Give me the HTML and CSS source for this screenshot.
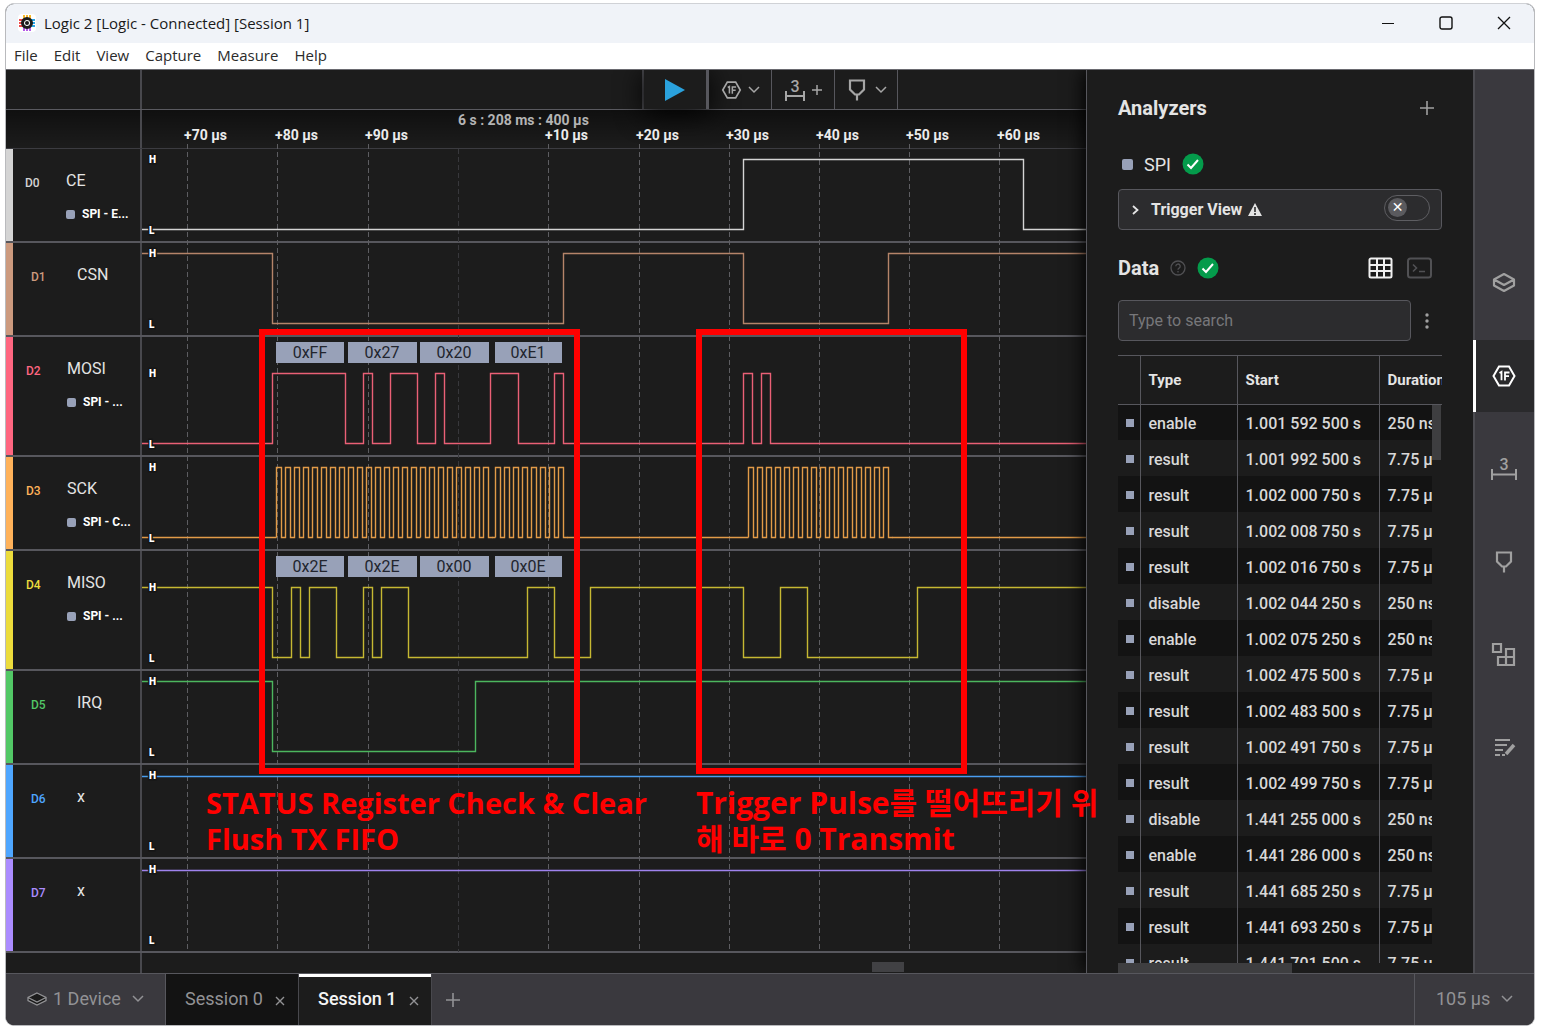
FILE: index.html
```html
<!DOCTYPE html>
<html lang="en">
<head>
<meta charset="utf-8">
<title>Logic 2 [Logic - Connected] [Session 1]</title>
<link rel="stylesheet" href="styles.css">
</head>
<body>
<svg class="defs" width="0" height="0" aria-hidden="true">
  <defs>
    <!-- eight clock pulses -->
    <path id="clock8" d="M0 70V0h5v70h4V0h5v70h4V0h5v70h4V0h5v70h4V0h5v70h4V0h5v70h4V0h5v70h4V0h5v70h4"/>
    <g id="i-hex" fill="none" stroke="currentColor" stroke-width="2">
      <path d="M7 2.500h10l5.500 9.500-5.500 9.500h-10l-5.500-9.500z"/>
      <path stroke-width="1.800" d="M7.500 9l2-1.200v8.500M13 16.500v-8h4.500M13 12.200h4"/>
    </g>
    <g id="i-pin" fill="none" stroke="currentColor" stroke-width="2.200">
      <path d="M5 2.500h14v9l-5 5h-4l-5-5zM12 16.500v6"/>
    </g>
    <path id="i-chev" d="M1 1l5 5 5-5" fill="none" stroke="currentColor" stroke-width="1.500"/>
    <g id="i-check"><circle cx="11" cy="11" r="10.500" fill="#049b4b"/><path d="M5.500 11.500l3.500 3.500 7-8" fill="none" stroke="#fff" stroke-width="2"/></g>
  </defs>
</svg>

<div class="window">
  <header class="titlebar">
    <svg class="logo" width="18" height="18" viewBox="0 0 18 18" aria-hidden="true">
      <rect width="18" height="18" rx="4" fill="#fff"/>
      <path d="M6 1v4M9 1v4M12 1v4" stroke="#f5b82e" stroke-width="2"/>
      <path d="M6 13v4M9 13v4M12 13v4" stroke="#b45be8" stroke-width="2"/>
      <path d="M1 6h4M1 9h4M1 12h4" stroke="#ee4a4a" stroke-width="2"/>
      <path d="M13 6h4M13 9h4M13 12h4" stroke="#2aa7e8" stroke-width="2"/>
      <circle cx="9" cy="9" r="4.500" fill="#fff" stroke="#1c1c1c" stroke-width="3"/>
      <circle cx="9" cy="9" r="2" fill="#1c1c1c"/>
    </svg>
    <h1>Logic 2 [Logic - Connected] [Session 1]</h1>
    <div class="wincontrols">
      <button aria-label="Minimize"><svg width="14" height="14"><path d="M1 7.500h12" stroke="#111"/></svg></button>
      <button aria-label="Maximize"><svg width="14" height="14"><rect x="1" y="1" width="12" height="12" rx="2" fill="none" stroke="#111" stroke-width="1.400"/></svg></button>
      <button aria-label="Close"><svg width="14" height="14"><path d="M1 1l12 12M13 1L1 13" stroke="#111" stroke-width="1.300"/></svg></button>
    </div>
  </header>
  <nav class="menubar">
    <button>File</button><button>Edit</button><button>View</button><button>Capture</button><button>Measure</button><button>Help</button>
  </nav>

  <div class="main">
    <section class="capture">
      <div class="toolbar">
        <div class="corner"></div>
        <div class="tools">
          <button class="tool play" aria-label="Start capture"><svg width="22" height="24"><path d="M1 1l20 11L1 23z" fill="#2aa1dc"/></svg></button>
          <button class="tool" aria-label="Add analyzer"><svg width="21" height="20" viewBox="0 0 24 24"><use href="#i-hex"/></svg><svg width="12" height="8"><use href="#i-chev"/></svg></button>
          <button class="tool" aria-label="Add measurement">
            <svg width="22" height="26"><text x="11" y="15" class="three">3</text><path d="M2 14v10M20 14v10M2 19h18" stroke="currentColor" stroke-width="2"/></svg>
            <svg width="10" height="10"><path d="M5 0v10M0 5h10" stroke="currentColor" stroke-width="1.500"/></svg>
          </button>
          <button class="tool" aria-label="Add marker"><svg width="24" height="24" viewBox="0 0 24 24"><use href="#i-pin"/></svg><svg width="12" height="8"><use href="#i-chev"/></svg></button>
        </div>
      </div>

      <div class="timeline">
        <div class="grid">
          <svg width="100%" height="100%">
            <g class="ticks">
              <text x="42" y="30">+70 µs</text><text x="133" y="30">+80 µs</text><text x="223" y="30">+90 µs</text>
              <text x="316" y="15" class="base">6 s : 208 ms : 400 µs</text>
              <text x="403" y="30">+10 µs</text><text x="494" y="30">+20 µs</text><text x="584" y="30">+30 µs</text>
              <text x="674" y="30">+40 µs</text><text x="764" y="30">+50 µs</text><text x="855" y="30">+60 µs</text>
            </g>
            <path class="gridline" d="M45.500 34V842M135.500 34V842M226.500 34V842M406.500 34V842M497.500 34V842M587.500 34V842M677.500 34V842M767.500 34V842M857.500 34V842"/>
            <path class="gridline dim" d="M316.500 39V842"/>
          </svg>
        </div>
        <div class="ruler"><div class="corner"></div></div>

        <div class="row d0">
          <div class="channel first"><span class="id">D0</span><div><div class="name">CE</div><div class="sub"><i></i>SPI - E...</div></div></div>
          <svg class="wave"><path d="M0 80.500H601.500V10.500H881.500V80.500H4000"/><g class="hl"><text x="7" y="14">H</text><text x="7" y="85">L</text></g></svg>
        </div>
        <div class="row d1">
          <div class="channel plain"><span class="id">D1</span><div class="name">CSN</div></div>
          <svg class="wave"><path d="M0 10.500H130.500V80.500H421.500V10.500H601.500V80.500H746.500V10.500H4000"/><g class="hl"><text x="7" y="14">H</text><text x="7" y="85">L</text></g></svg>
        </div>
        <div class="row tall d2">
          <div class="channel"><span class="id">D2</span><div><div class="name">MOSI</div><div class="sub"><i></i>SPI - ...</div></div></div>
          <svg class="wave"><path d="M0 106.500H130.500V36.500H203.500V106.500H221.500V36.500H230.500V106.500H248.500V36.500H275.500V106.500H293.500V36.500H302.500V106.500H348.500V36.500H376.500V106.500H412.500V36.500H421.500V106.500H601.500V36.500H610.500V106.500H619.500V36.500H628.500V106.500H4000"/>
            <g class="frame"><rect x="134" y="5" width="68" height="21"/><rect x="206" y="5" width="69" height="21"/><rect x="278" y="5" width="69" height="21"/><rect x="353" y="5" width="67" height="21"/>
            <text x="168" y="21">0xFF</text><text x="240" y="21">0x27</text><text x="312" y="21">0x20</text><text x="386" y="21">0xE1</text></g>
            <g class="hl"><text x="7" y="40">H</text><text x="7" y="111">L</text></g></svg>
        </div>
        <div class="row d3">
          <div class="channel"><span class="id">D3</span><div><div class="name">SCK</div><div class="sub"><i></i>SPI - C...</div></div></div>
          <svg class="wave"><path d="M0 80.500H134.500M350 80.500H353.500M425 80.500H606.500M750 80.500H4000"/>
            <use href="#clock8" x="134.500" y="10.500"/><use href="#clock8" x="206.500" y="10.500"/><use href="#clock8" x="278.500" y="10.500"/><use href="#clock8" x="353.500" y="10.500"/><use href="#clock8" x="606.500" y="10.500"/><use href="#clock8" x="678.500" y="10.500"/>
            <g class="hl"><text x="7" y="14">H</text><text x="7" y="85">L</text></g></svg>
        </div>
        <div class="row tall d4">
          <div class="channel"><span class="id">D4</span><div><div class="name">MISO</div><div class="sub"><i></i>SPI - ...</div></div></div>
          <svg class="wave"><path d="M0 36.500H130.500V106.500H149.500V36.500H158.500V106.500H167.500V36.500H194.500V106.500H221.500V36.500H230.500V106.500H239.500V36.500H266.500V106.500H385.500V36.500H412.500V106.500H448.500V36.500H601.500V106.500H638.500V36.500H665.500V106.500H775.500V36.500H4000"/>
            <g class="frame"><rect x="134" y="5" width="68" height="21"/><rect x="206" y="5" width="69" height="21"/><rect x="278" y="5" width="69" height="21"/><rect x="353" y="5" width="67" height="21"/>
            <text x="168" y="21">0x2E</text><text x="240" y="21">0x2E</text><text x="312" y="21">0x00</text><text x="386" y="21">0x0E</text></g>
            <g class="hl"><text x="7" y="40">H</text><text x="7" y="111">L</text></g></svg>
        </div>
        <div class="row d5">
          <div class="channel plain"><span class="id">D5</span><div class="name">IRQ</div></div>
          <svg class="wave"><path d="M0 10.500H130.500V80.500H333.500V10.500H4000"/><g class="hl"><text x="7" y="14">H</text><text x="7" y="85">L</text></g></svg>
        </div>
        <div class="row d6">
          <div class="channel plain"><span class="id">D6</span><div class="name">x</div></div>
          <svg class="wave"><path d="M0 11.500H4000"/><g class="hl"><text x="7" y="14">H</text><text x="7" y="85">L</text></g></svg>
        </div>
        <div class="row d7">
          <div class="channel plain"><span class="id">D7</span><div class="name">x</div></div>
          <svg class="wave"><path d="M0 11.500H4000"/><g class="hl"><text x="7" y="14">H</text><text x="7" y="85">L</text></g></svg>
        </div>
        <div class="scrollrow"><div class="corner"></div><div class="track"><div class="thumb"></div></div></div>
      </div>
    </section>

    <aside class="panel">
      <div class="head"><h2>Analyzers</h2><button class="icon" aria-label="Add analyzer"><svg width="14" height="14"><path d="M7 0v14M0 7h14" stroke="currentColor" stroke-width="1.600"/></svg></button></div>
      <div class="analyzer"><i></i><span>SPI</span><svg width="22" height="22"><use href="#i-check"/></svg></div>
      <div class="trigger">
        <svg width="8" height="12"><path d="M1 2l4.500 4L1 10" fill="none" stroke="#e4e4e4" stroke-width="1.800"/></svg>
        <label for="trig">Trigger View</label>
        <svg class="warn" width="14" height="13"><path d="M7 0l7 13H0z" fill="#e4e4e4"/><path d="M7 4v5M7 10v2" stroke="#2c2c2e" stroke-width="1.600"/></svg>
        <input type="checkbox" id="trig" class="switch">
      </div>
      <div class="head data"><h2>Data</h2>
        <svg width="16" height="16" class="help"><circle cx="8" cy="8" r="7" fill="none" stroke="#505053" stroke-width="1.300"/><path d="M5.800 6.200a2.200 2.200 0 1 1 3.300 1.900q-1.100.7-1.100 1.700M8 11v1.400" fill="none" stroke="#505053" stroke-width="1.300"/></svg>
        <svg width="22" height="22"><use href="#i-check"/></svg>
        <button class="icon table-view" aria-label="Table view"><svg width="25" height="22"><path d="M3 1.500h19a1.500 1.500 0 0 1 1.500 1.500v16a1.500 1.500 0 0 1-1.500 1.500h-19a1.500 1.500 0 0 1-1.500-1.500v-16a1.500 1.500 0 0 1 1.500-1.500zM9 1v20M16 1v20M1 8h23M1 14h23" fill="none" stroke="#f0f0f0" stroke-width="2"/></svg></button>
        <button class="icon" aria-label="Terminal view"><svg width="25" height="22"><rect x="1" y="1.500" width="23" height="19" rx="2.500" fill="none" stroke="#515154" stroke-width="2"/><path d="M6 7.500l3.500 3.500L6 14.500M12 14.500h6" fill="none" stroke="#515154" stroke-width="1.600"/></svg></button>
      </div>
      <div class="search">
        <input type="text" placeholder="Type to search" aria-label="Search data">
        <button class="icon" aria-label="More"><svg width="4" height="18"><g fill="#a0a0a0"><circle cx="2" cy="3" r="1.700"/><circle cx="2" cy="9" r="1.700"/><circle cx="2" cy="15" r="1.700"/></g></svg></button>
      </div>
      <div class="tablebox">
        <table>
          <colgroup><col class="c1"><col class="c2"><col class="c3"><col class="c4"></colgroup>
          <thead><tr><th></th><th>Type</th><th>Start</th><th>Duration</th></tr></thead>
          <tbody>
            <tr><td><i></i></td><td>enable</td><td>1.001 592 500 s</td><td>250 ns</td></tr>
            <tr><td><i></i></td><td>result</td><td>1.001 992 500 s</td><td>7.75 µs</td></tr>
            <tr><td><i></i></td><td>result</td><td>1.002 000 750 s</td><td>7.75 µs</td></tr>
            <tr><td><i></i></td><td>result</td><td>1.002 008 750 s</td><td>7.75 µs</td></tr>
            <tr><td><i></i></td><td>result</td><td>1.002 016 750 s</td><td>7.75 µs</td></tr>
            <tr><td><i></i></td><td>disable</td><td>1.002 044 250 s</td><td>250 ns</td></tr>
            <tr><td><i></i></td><td>enable</td><td>1.002 075 250 s</td><td>250 ns</td></tr>
            <tr><td><i></i></td><td>result</td><td>1.002 475 500 s</td><td>7.75 µs</td></tr>
            <tr><td><i></i></td><td>result</td><td>1.002 483 500 s</td><td>7.75 µs</td></tr>
            <tr><td><i></i></td><td>result</td><td>1.002 491 750 s</td><td>7.75 µs</td></tr>
            <tr><td><i></i></td><td>result</td><td>1.002 499 750 s</td><td>7.75 µs</td></tr>
            <tr><td><i></i></td><td>disable</td><td>1.441 255 000 s</td><td>250 ns</td></tr>
            <tr><td><i></i></td><td>enable</td><td>1.441 286 000 s</td><td>250 ns</td></tr>
            <tr><td><i></i></td><td>result</td><td>1.441 685 250 s</td><td>7.75 µs</td></tr>
            <tr><td><i></i></td><td>result</td><td>1.441 693 250 s</td><td>7.75 µs</td></tr>
            <tr><td><i></i></td><td>result</td><td>1.441 701 500 s</td><td>7.75 µs</td></tr>
          </tbody>
        </table>
        <div class="vscroll"></div>
      </div>
      <div class="hscroll"></div>
    </aside>

    <nav class="rail">
      <button aria-label="Device"><svg width="26" height="22"><path d="M13 2l10 5.500v6L13 19 3 13.500v-6zM3 7.500l10 5.500 10-5.500" fill="none" stroke="currentColor" stroke-width="2.200" stroke-linejoin="round"/></svg></button>
      <button class="active" aria-label="Analyzers"><svg width="24" height="24"><use href="#i-hex"/></svg></button>
      <button aria-label="Measurements"><svg width="28" height="28"><text x="14" y="15" class="three">3</text><path d="M2 14v11M26 14v11M2 19.500h24" stroke="currentColor" stroke-width="2"/></svg></button>
      <button aria-label="Markers"><svg width="24" height="24"><use href="#i-pin"/></svg></button>
      <button aria-label="Extensions"><svg width="26" height="28"><path d="M2 3h8v8H2zM7 16h8v8H7zM15 16h8v8h-8zM15 8h8v8h-8z" fill="none" stroke="currentColor" stroke-width="2.200"/></svg></button>
      <button aria-label="Notes"><svg width="24" height="22"><path d="M3 3h15M3 8h12M3 13h8M3 18h5M10 18h3" stroke="currentColor" stroke-width="2.200"/><path d="M14 17l8-9" stroke="currentColor" stroke-width="3.500"/></svg></button>
    </nav>
  </div>

  <footer class="bottombar">
    <button class="device"><svg width="22" height="16"><path d="M11 2l9 4.500v3L11 14l-9-4.500v-3z" fill="#1c1c1c"/><path d="M11 2l9 4.500v3L11 14l-9-4.500v-3zM2 6.500l9 4.500 9-4.500" fill="none" stroke="currentColor" stroke-width="1.300"/></svg><span>1 Device</span><svg class="chev" width="12" height="8"><use href="#i-chev"/></svg></button>
    <div class="tab"><button>Session 0</button><button class="x" aria-label="Close Session 0"><svg width="10" height="10"><path d="M1 1l8 8M9 1L1 9" stroke="currentColor" stroke-width="1.400"/></svg></button></div>
    <div class="tab current"><button>Session 1</button><button class="x" aria-label="Close Session 1"><svg width="10" height="10"><path d="M1 1l8 8M9 1L1 9" stroke="currentColor" stroke-width="1.400"/></svg></button></div>
    <button class="newtab" aria-label="New session"><svg width="14" height="14"><path d="M7 0v14M0 7h14" stroke="currentColor" stroke-width="1.600"/></svg></button>
    <button class="span"><span>105 µs</span><svg width="12" height="8"><use href="#i-chev"/></svg></button>
  </footer>

  <!-- review notes drawn over the capture -->
  <div class="mark box-a"></div>
  <div class="mark box-b"></div>
  <p class="note note-a">STATUS Register Check &amp; Clear<br>Flush TX FIFO</p>
  <p class="note note-b" lang="ko">Trigger Pulse를 떨어뜨리기 위<br>해 바로 0 Transmit</p>
</div>
</body>
</html>
```
FILE: styles.css
```css
* { box-sizing: border-box; }
body {
  margin: 0;
  padding: 3px 7px 1px 5px;
  height: 100vh;
  min-height: 1027px;
  background: #fff;
  font-family: Roboto, "Liberation Sans", sans-serif;
  color: #e4e4e4;
  display: flex;
}
button {
  margin: 0;
  padding: 0;
  border: 0;
  background: none;
  color: inherit;
  font: inherit;
}
svg { display: block; flex: none; }
h1, h2, p { margin: 0; }
.defs { position: absolute; }

.window {
  position: relative;
  flex: 1;
  min-width: 0;
  display: flex;
  flex-direction: column;
  border: 1px solid #b9babd;
  border-top-color: #d0d2d6;
  border-radius: 9px;
  overflow: hidden;
  background: #1c1c1c;
}

.titlebar {
  display: flex;
  align-items: center;
  height: 39px;
  padding: 0 0 2px 12px;
  gap: 8px;
  background: #f0f3f8;
  color: #1a1a1a;
}
.titlebar h1 { font: 400 15px "Open Sans", "Noto Sans", sans-serif; }
.wincontrols { display: flex; margin-left: auto; padding-right: 1px; }
.wincontrols button {
  width: 58px;
  height: 36px;
  display: grid;
  place-items: center;
}
.menubar {
  display: flex;
  gap: 16px;
  height: 26px;
  padding: 0 0 2px 8px;
  background: #fff;
  color: #2b2b2b;
  font: 400 15px "Open Sans", "Noto Sans", sans-serif;
}

.main {
  flex: 1;
  min-height: 0;
  display: flex;
  overflow: hidden;
  border-top: 1px solid #6a6a70;
}
.capture { flex: 1; min-width: 0; display: flex; flex-direction: column; }
.corner { width: 136px; flex: none; border-right: 2px solid #48484d; }
.toolbar { display: flex; height: 40px; border-bottom: 1px solid #5a5a60; }
.tools {
  display: flex;
  margin-left: calc(50vw - 271px);
  color: #a6a6a6;
  border-left: 2px solid #4b4b50;
}
.tool {
  width: 63px;
  display: flex;
  align-items: center;
  justify-content: center;
  gap: 6px;
  border-right: 1px solid #57575d;
}
.play { width: 65px; border-right: 3px solid #57575d; box-shadow: 0 4px 28px #000; }
.three { font-size: 16px; font-weight: 500; text-anchor: middle; fill: currentColor; }

.timeline { position: relative; flex: 1; display: flex; flex-direction: column; }
.grid { position: absolute; inset: 0 0 0 136px; pointer-events: none; }
.ticks text { font-size: 14px; font-weight: 700; fill: #ececec; }
.ticks .base { fill: #b4b4b4; }
.gridline { fill: none; stroke: #5d5d61; stroke-dasharray: 5 3; }
.gridline.dim { stroke: #38383c; }
.ruler {
  display: flex;
  height: 39px;
  border-bottom: 1px solid #3c3c41;
  background: linear-gradient(rgba(0,0,0,.45), rgba(0,0,0,0));
}
.row { display: flex; height: 94px; border-bottom: 2px solid #57575d; }
.row.tall { height: 120px; }
.channel {
  width: 136px;
  flex: none;
  display: grid;
  grid-template-columns: 41px 1fr;
  align-content: start;
  padding: 22px 0 0 13px;
  border-left: 7px solid var(--c);
  border-right: 2px solid #48484d;
}
.channel.first { padding-left: 12px; }
.channel.plain { grid-template-columns: 46px 1fr; padding-left: 18px; }
.id { color: var(--c); font-size: 12px; line-height: 24px; font-weight: 500; }
.name { font-size: 16px; line-height: 20px; }
.sub {
  display: flex;
  align-items: center;
  gap: 7px;
  margin-top: 15px;
  font-size: 12px;
  line-height: 16px;
  font-weight: 700;
  color: #fff;
}
i { display: block; width: 9px; height: 9px; border-radius: 2px; background: #98a1b8; }
.wave {
  flex: 1;
  min-width: 0;
  height: 100%;
  position: relative;
  overflow: hidden;
  stroke: var(--w);
  stroke-width: 1.4px;
  fill: none;
}
.hl text {
  font-size: 10px;
  font-weight: 900;
  fill: #fff;
  stroke: #161616;
  stroke-width: 3px;
  paint-order: stroke;
}
.frame { stroke: none; fill: #98a1b8; }
.frame text { font-size: 16px; fill: #22252e; text-anchor: middle; }
.d0 { --c: #d4d4d4; --w: #d4d4d4; }
.d1 { --c: #cc9a7e; --w: #b58469; }
.d2 { --c: #ff6680; --w: #ea6076; }
.d3 { --c: #ffb25a; --w: #e29b48; }
.d4 { --c: #ecdc3c; --w: #c6b832; }
.d5 { --c: #52c866; --w: #4cb65e; }
.d6 { --c: #4ea6ff; --w: #4a9df0; }
.d7 { --c: #ab8cff; --w: #9f83ee; }
.scrollrow { flex: 1; display: flex; }
.track { flex: 1; padding: 9px 182px 0 0; }
.thumb { width: 32px; height: 10px; margin-left: auto; background: #414144; }

.panel {
  position: relative;
  width: 387px;
  flex: none;
  display: flex;
  flex-direction: column;
  padding: 26px 31px 0;
  border-left: 1px solid #57575d;
  background: #1c1c1c;
  box-shadow: -2px 0 18px #000;
}
.head { display: flex; align-items: center; justify-content: space-between; height: 24px; padding-right: 8px; }
.head h2 { font-size: 20px; font-weight: 700; }
.icon { color: #a0a0a0; }
.analyzer { display: flex; align-items: center; height: 22px; margin-top: 33px; padding-left: 4px; gap: 11px; font-size: 18px; }
.analyzer i { width: 11px; height: 11px; }
.trigger {
  display: flex;
  align-items: center;
  height: 41px;
  margin-top: 14px;
  padding: 0 11px 0 13px;
  border: 1px solid #57575d;
  border-radius: 4px;
  background: #2c2c2e;
  font-size: 16px;
  font-weight: 700;
}
.trigger label { margin: 0 6px 0 11px; }
.switch {
  appearance: none;
  width: 46px;
  height: 26px;
  margin: 0 0 4px auto;
  border: 1px solid #5e5e62;
  border-radius: 13px;
  display: flex;
  align-items: center;
  justify-content: flex-start;
  padding-left: 3px;
}
.switch::before {
  content: "✕";
  width: 19px;
  height: 19px;
  border-radius: 50%;
  background: #5a5a5e;
  color: #fff;
  font: 700 14px/19px "DejaVu Sans", sans-serif;
  text-align: center;
}
.head.data { margin-top: 26px; justify-content: flex-start; gap: 11px; padding-right: 10px; }
.table-view { margin-left: auto; margin-right: 3px; }
.search { display: flex; align-items: center; gap: 14px; margin-top: 20px; }
.search input {
  flex: 1;
  min-width: 0;
  height: 41px;
  padding: 0 10px;
  border: 1px solid #57575d;
  border-radius: 4px;
  background: #2c2c2e;
  color: #e4e4e4;
  font: 400 16px Roboto, sans-serif;
}
.search input::placeholder { color: #77777a; }
.search .icon { margin-right: 13px; }
.tablebox { position: relative; flex: 1; min-height: 0; margin-top: 14px; overflow: hidden; border-top: 1px solid #57575d; }
table { width: 361px; table-layout: fixed; border-collapse: collapse; }
.c1 { width: 22px; }
.c2 { width: 97px; }
.c3 { width: 142px; }
.c4 { width: 100px; }
th, td { padding: 0 0 0 8px; text-align: left; white-space: nowrap; border-right: 1px solid #57575d; }
th { height: 48px; font-size: 15px; font-weight: 700; border-bottom: 1px solid #57575d; }
td { height: 36px; padding-top: 2px; font-size: 16px; font-weight: 500; color: #d8d8d8; }
td i { width: 8px; height: 8px; border-radius: 0; }
tbody tr:nth-child(odd) { background: #131313; }
.vscroll { position: absolute; inset: 49px 0 0 auto; width: 10px; background: linear-gradient(#3e3e40, #3e3e40) 0 0 / 9px 55px no-repeat #1c1c1c; }
.hscroll { width: 174px; height: 10px; background: #3e3e40; }

.rail {
  position: relative;
  width: 61px;
  flex: none;
  display: flex;
  flex-direction: column;
  gap: 21px;
  padding-top: 177px;
  background: #3a393e;
  box-shadow: inset 2px 0 #4c4c51;
  color: #a0a0a0;
}
.rail button {
  height: 72px;
  padding-right: 2px;
  display: grid;
  place-items: center;
  border-left: 2px solid #4c4c51;
}
.rail .active { background: #2a2a2c; color: #fff; border-left: 3px solid #fff; }

.bottombar {
  display: flex;
  height: 52px;
  flex: none;
  border-top: 1px solid #57575d;
  background: #3a393e;
  color: #929295;
  font-size: 18px;
}
.device, .tab, .span { display: flex; align-items: center; padding-bottom: 2px; }
.device { width: 160px; padding-left: 20px; gap: 5px; border-right: 1px solid #57575d; }
.device .chev { margin-left: 6px; }
.tab { gap: 12px; width: 133px; padding-left: 19px; background: #131313; border-right: 1px solid #48484d; }
.tab.current { background: #1c1c1c; color: #f4f4f4; box-shadow: inset 0 3px #fff; font-weight: 500; }
.tab .x { color: #929295; padding-top: 4px; }
.newtab { padding: 0 14px; }
.span { gap: 11px; width: 120px; margin-left: auto; padding-left: 21px; border-left: 1px solid #57575d; }

.mark { position: absolute; border: 6px solid #f00; top: 325px; height: 445px; }
.box-a { left: 253px; width: 321px; }
.box-b { left: 690px; width: 271px; }
.note { position: absolute; top: 781px; color: #f00; font: 700 29px/36px "Open Sans", "Noto Sans CJK KR", sans-serif; white-space: nowrap; }
.note-a { left: 200px; }
.note-b { left: 690px; font-size: 30px; }
```
